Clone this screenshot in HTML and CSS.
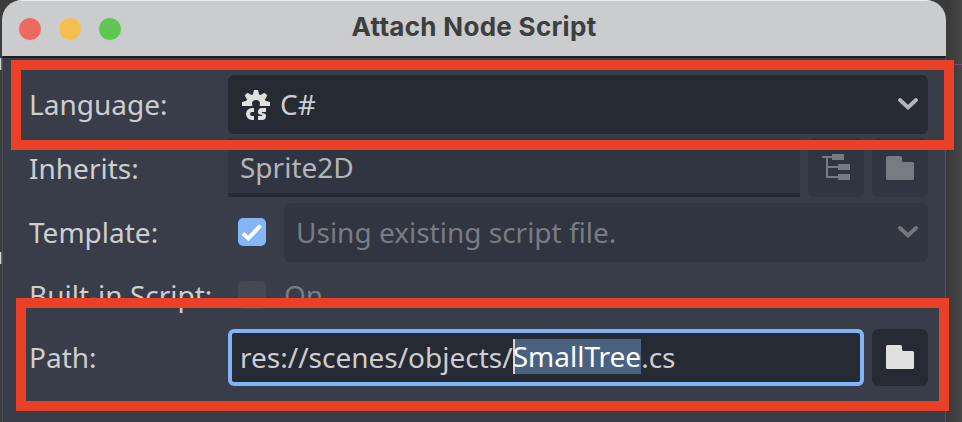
FILE: index.html
```html
<!DOCTYPE html>
<html lang="en">
<head>
<meta charset="utf-8">
<title>Attach Node Script</title>
<link rel="stylesheet" href="styles.css">
</head>
<body>
<svg width="0" height="0" class="symbols" aria-hidden="true">
  <symbol id="folder" viewBox="0 0 28 24"><path d="M0 1.5Q0 0 1.5 0H14.5Q16 0 16 1.5V4.5Q16 6 17.5 6H26.5Q28 6 28 7.5V22.5Q28 24 26.5 24H1.5Q0 24 0 22.5Z"/></symbol>
  <symbol id="chevron" viewBox="0 0 20 12"><path d="M2 2l8 7.5L18 2" fill="none" stroke="currentColor" stroke-width="3.8" stroke-linecap="round"/></symbol>
</svg>
<span class="behind behind-top"></span>
<span class="behind behind-bottom"></span>
<span class="guide"></span>
<main class="window">
  <header class="titlebar">
    <div class="lights"><i class="close"></i><i class="minimize"></i><i class="zoom"></i></div>
    <h1>Attach Node Script</h1>
  </header>
  <div class="form">
    <div class="row language">
      <label>Language:</label>
      <div class="select">
        <svg class="cs" viewBox="0 0 16 16"><path d="M7 1l-.565 2.258a5 5 0 0 0-.689.28L3.758 2.343 2.344 3.758l1.195 1.99a5 5 0 0 0-.285.688L1 7v2h5.27A2 2 0 0 1 6 8a2 2 0 0 1 4 0 2 2 0 0 1-.27 1H15V7l-2.258-.565a5 5 0 0 0-.28-.688l1.195-1.99-1.414-1.414-1.99 1.195a5 5 0 0 0-.688-.285L9 1zM6 10a3 3 0 0 0 0 6h1v-2H6a1 1 0 0 1 0-2h1v-2zM11 10a2 2 0 0 0-2 2 1.4 1.4 0 0 0 1.4 1.4h.6v.6H9v2h2a2 2 0 0 0 2-2 1.4 1.4 0 0 0-1.4-1.4H11V12h2v-2z"/></svg>
        <span>C#</span>
        <svg class="chevron"><use href="#chevron"/></svg>
      </div>
    </div>
    <div class="row inherits">
      <label>Inherits:</label>
      <div class="field readonly">Sprite2D</div>
      <div class="button disabled"><svg class="tree" viewBox="0 0 28 26"><path d="M0 2h10V0h12v6H10V4H6v8h10v-2h12v6H16v-2H6v8h10v-2h12v6H16v-2H4V4H0z"/></svg></div>
      <div class="button disabled"><svg class="folder"><use href="#folder"/></svg></div>
    </div>
    <div class="row template">
      <label>Template:</label>
      <div class="check on"><svg viewBox="0 0 28 28"><path d="M5 15.5l5.3 5L22.5 7.5" fill="none" stroke="#fff" stroke-width="4"/></svg></div>
      <div class="select disabled"><span>Using existing script file.</span><svg class="chevron"><use href="#chevron"/></svg></div>
    </div>
    <div class="row builtin">
      <label>Built-in Script:</label>
      <div class="check"></div>
      <span class="off">On</span>
    </div>
    <div class="row path">
      <label>Path:</label>
      <div class="field focused"><span>res://scenes/objects/</span><mark>SmallTree</mark><span>.cs</span></div>
      <div class="button"><svg class="folder"><use href="#folder"/></svg></div>
    </div>
  </div>
</main>
<div class="highlight highlight-language"></div>
<div class="highlight highlight-path"></div>
</body>
</html>
```
FILE: styles.css
```css
* { box-sizing: border-box; }
body {
  margin: 0;
  width: 962px;
  height: 422px;
  overflow: hidden;
  position: relative;
  background: linear-gradient(90deg, #3c3c3c 0, #3c3c3c 945px, #383838 946px, #464646 962px);
  font: 28px/38px "Noto Sans", sans-serif;
  color: #cdced1;
}
svg { display: block; flex: none; fill: currentColor; }
.symbols { position: absolute; }
.window {
  width: 944px;
  height: 440px;
  margin-left: 2px;
  border-radius: 20px 20px 0 0;
  overflow: hidden;
  background: #383d49;
}
.titlebar {
  height: 56px;
  display: grid;
  grid-template-columns: 1fr auto 1fr;
  align-items: center;
  padding: 0 16px;
  background: #cbcccd;
  border-top: 1px solid #ececec;
}
.lights { display: flex; gap: 16px; }
.lights i { width: 24px; height: 24px; border-radius: 50%; border: 1px solid; }
.close { background: #ed6a5e; border-color: #d3544b; }
.minimize { background: #f5bf4f; border-color: #d6a243; }
.zoom { background: #61c554; border-color: #4fa73f; }
h1 {
  margin: 0 0 3px;
  font: 700 26px/34px Inter, sans-serif;
  letter-spacing: 0.3px;
  color: #3d3e3e;
}
.form {
  height: 384px;
  padding: 17px 17px 0 26px;
  border-top: 2px solid #1b1e29;
  border-left: 1px solid #4a4e59;
  border-right: 1px solid #545863;
}
.row { display: flex; align-items: center; height: 59px; gap: 8px; }
label { width: 191px; flex: none; white-space: nowrap; padding-bottom: 2px; }
.select, .field, .button {
  display: flex;
  align-items: center;
  height: 100%;
  background: #262a33;
  border-radius: 6px;
}
.select { flex: 1; padding: 0 10px 0 12px; }
.select span { flex: 1; padding-bottom: 2px; }
.cs { width: 32px; height: 32px; margin: 0 8px 1px 0; color: #e0e0e0; }
.chevron { width: 20px; height: 12px; margin-bottom: 1px; color: #b5b6b8; }
.field { flex: 1; padding: 0 12px; }
.button { width: 56px; flex: none; justify-content: center; color: #e0e0e0; }
.folder { width: 28px; height: 24px; }
.tree { width: 28px; height: 26px; }
.disabled { background: #303541; color: #777b84; }
.select.disabled { color: #797c84; }
.select.disabled .chevron { color: #74777e; }
.language { margin-bottom: 4px; }
.inherits { margin-bottom: 6px; }
.inherits label { padding: 0; }
.inherits .folder { margin-top: 1px; }
.inherits .tree { margin-bottom: 1px; }
.readonly { background: #303541; border-bottom: 4px solid #262a33; border-radius: 0; color: #b3b5b9; padding-top: 2px; }
.template { margin-bottom: 4px; }
.check { width: 28px; height: 28px; margin: 0 10px 1px; border-radius: 5px; background: #454850; }
.check.on { background: #84b6f7; }
.off { color: #797c84; padding-bottom: 2px; }
.path { height: 57px; margin-top: 4px; }
.path .folder { margin-bottom: 1px; }
.focused { background: #262a33; border: 4px solid #80b4f7; padding: 0 8px 2px; }
mark {
  height: 35px;
  line-height: 35px;
  color: #fff;
  background: #4a6180;
  box-shadow: inset 2px 0 #d4d6d9;
}
.highlight { position: absolute; border: 10px solid #ea4025; }
.highlight-language { left: 11px; top: 60px; width: 943px; height: 90px; }
.highlight-path { left: 16px; top: 298px; width: 933px; height: 113px; }
.guide { position: absolute; left: 947px; top: 64px; width: 15px; height: 1px; background: #884281; }
.behind { position: absolute; left: 0; width: 2px; height: 12px; background: linear-gradient(90deg, #d5d5d5 1px, #a44e48 1px); }
.behind-top { top: 58px; }
.behind-bottom { top: 252px; }
```
